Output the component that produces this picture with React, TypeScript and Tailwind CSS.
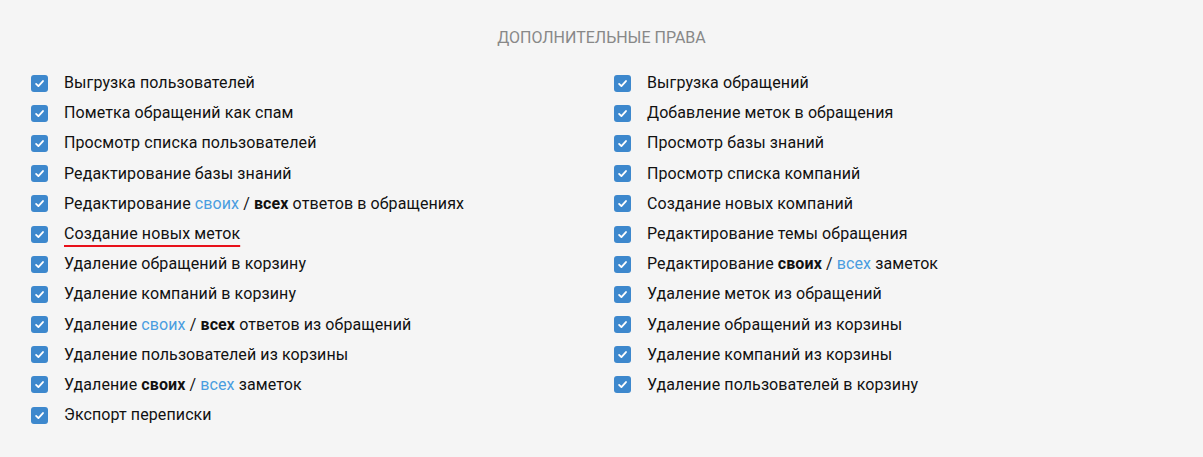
import type { ReactNode } from 'react'

type Item = { label: ReactNode; marked?: boolean }

const own = (t: string) => <span className="text-[#4a9de0]">{t}</span>
const bold = (t: string) => <b className="font-bold">{t}</b>

const left: Item[] = [
  { label: 'Выгрузка пользователей' },
  { label: 'Пометка обращений как спам' },
  { label: 'Просмотр списка пользователей' },
  { label: 'Редактирование базы знаний' },
  { label: <>Редактирование {own('своих')} / {bold('всех')} ответов в обращениях</> },
  { label: 'Создание новых меток', marked: true },
  { label: 'Удаление обращений в корзину' },
  { label: 'Удаление компаний в корзину' },
  { label: <>Удаление {own('своих')} / {bold('всех')} ответов из обращений</> },
  { label: 'Удаление пользователей из корзины' },
  { label: <>Удаление {bold('своих')} / {own('всех')} заметок</> },
  { label: 'Экспорт переписки' },
]

const right: Item[] = [
  { label: 'Выгрузка обращений' },
  { label: 'Добавление меток в обращения' },
  { label: 'Просмотр базы знаний' },
  { label: 'Просмотр списка компаний' },
  { label: 'Создание новых компаний' },
  { label: 'Редактирование темы обращения' },
  { label: <>Редактирование {bold('своих')} / {own('всех')} заметок</> },
  { label: 'Удаление меток из обращений' },
  { label: 'Удаление обращений из корзины' },
  { label: 'Удаление компаний из корзины' },
  { label: 'Удаление пользователей в корзину' },
]

function Check() {
  return (
    <span className="flex h-[17px] w-[17px] shrink-0 items-center justify-center rounded-[3px] bg-[#3d88cd]">
      <svg width="11" height="11" viewBox="0 0 12 12" fill="none">
        <path d="M2.3 6.4 4.8 8.8 9.8 3.3" stroke="white" strokeWidth="2" strokeLinecap="round" strokeLinejoin="round" />
      </svg>
    </span>
  )
}

function Row({ item }: { item: Item }) {
  return (
    <li className="flex h-[30.2px] items-center gap-4">
      <Check />
      <span
        className={
          item.marked
            ? 'underline decoration-[#e8101a] decoration-2 underline-offset-[6px]'
            : ''
        }
      >
        {item.label}
      </span>
    </li>
  )
}

export default function App() {
  return (
    <div className="min-h-screen bg-[#f5f5f5] pt-[28px] font-['Roboto',sans-serif] text-[16px] tracking-[0.1px] text-[#111]">
      <h2 className="mb-5 text-center text-[16px] leading-5 uppercase tracking-normal text-[#888]">
        Дополнительные права
      </h2>
      <div className="flex pl-[31px]">
        <ul className="w-[583px]">
          {left.map((it, i) => (
            <Row key={i} item={it} />
          ))}
        </ul>
        <ul>
          {right.map((it, i) => (
            <Row key={i} item={it} />
          ))}
        </ul>
      </div>
    </div>
  )
}
